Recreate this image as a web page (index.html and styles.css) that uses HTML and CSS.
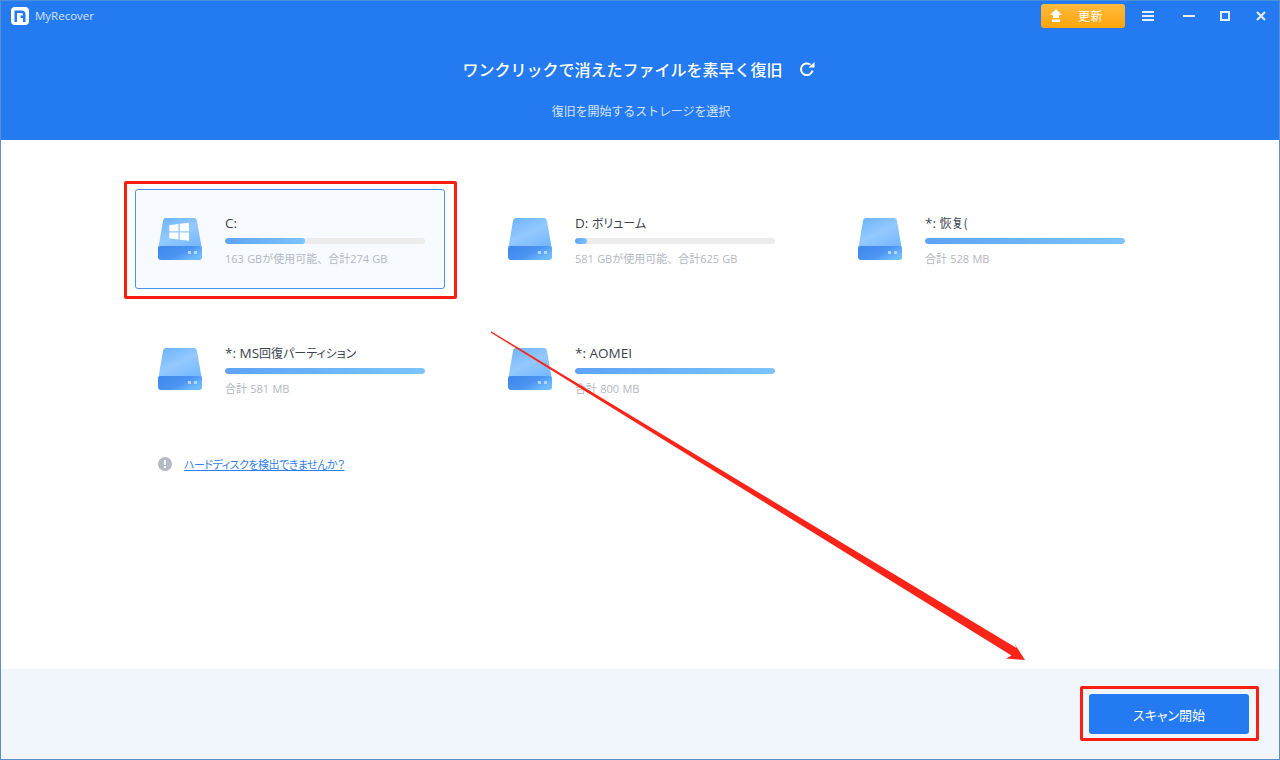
FILE: index.html
```html
<!DOCTYPE html>
<html lang="ja">
<head>
<meta charset="utf-8">
<title>MyRecover</title>
<link rel="stylesheet" href="styles.css">
</head>
<body>
<div class="window">
  <svg width="0" height="0" class="defs">
    <defs>
      <linearGradient id="dTop" x1="0.15" y1="0" x2="0.85" y2="1">
        <stop offset="0" stop-color="#70b4fc"/><stop offset="0.5" stop-color="#93c9fe"/><stop offset="1" stop-color="#75b8fc"/>
      </linearGradient>
      <linearGradient id="dBot" x1="0" y1="0" x2="1" y2="0.6">
        <stop offset="0" stop-color="#3d87ec"/><stop offset="0.6" stop-color="#4b94f2"/><stop offset="1" stop-color="#6ebcfb"/>
      </linearGradient>
      <symbol id="disk" viewBox="0 0 44 42">
        <path d="M8 0H36Q38.500 0 39 3L43.500 29H0.500L5 3Q5.500 0 8 0Z" fill="url(#dTop)"/>
        <path d="M0 30Q0 28 3 28H41Q44 28 44 30V39Q44 42 41 42H3Q0 42 0 39Z" fill="url(#dBot)"/>
        <rect x="30" y="33" width="3" height="3" fill="#b5d6fa"/>
        <rect x="36" y="33" width="3" height="3" fill="#b5d6fa"/>
      </symbol>
    </defs>
  </svg>

  <header class="hero">
    <div class="titlebar">
      <div class="brand">
        <svg class="logo" width="18" height="18" viewBox="0 0 18 18">
          <rect width="18" height="18" rx="4" fill="#fff"/>
          <path d="M3.500 15V3.500H10.500Q14.500 3.500 14.500 7.500V15H12V11H9.500V8.500H12V7.500Q12 6 10.500 6H6V15Z" fill="#247af0"/>
        </svg>
        <span class="brand-name">MyRecover</span>
      </div>
      <div class="controls">
        <button class="update">
          <svg width="12" height="13" viewBox="0 0 12 13"><path d="M6 0L12 6H9V9H3V6H0Z M2 10.500H10V13H2Z" fill="#fff"/></svg>
          <span>更新</span>
        </button>
        <svg class="ctl ctl-menu" width="12" height="10" viewBox="0 0 12 10"><path d="M0 0H12V2H0ZM0 4H12V6H0ZM0 8H12V10H0Z" fill="#e6eefa"/></svg>
        <svg class="ctl ctl-min" width="12" height="2" viewBox="0 0 12 2"><path d="M0 0H12V2H0Z" fill="#e6eefa"/></svg>
        <svg class="ctl ctl-max" width="10" height="10" viewBox="0 0 10 10"><path d="M1 1H9V9H1Z" fill="none" stroke="#e6eefa" stroke-width="2"/></svg>
        <svg class="ctl ctl-close" width="10" height="10" viewBox="0 0 10 10"><path d="M1 1L9 9M9 1L1 9" fill="none" stroke="#e6eefa" stroke-width="2"/></svg>
      </div>
    </div>
    <div class="hero-title">
      <h1>ワンクリックで消えたファイルを素早く復旧</h1>
      <svg class="refresh" width="16" height="16" viewBox="0 0 16 16"><path d="M13.500 9.500A5.800 5.800 0 1 1 11.500 3.800" fill="none" stroke="#fff" stroke-width="2"/><path d="M9.500 6.500H15.500V1Z" fill="#fff"/></svg>
    </div>
    <p class="hero-sub">復旧を開始するストレージを選択</p>
  </header>

  <main class="content">
    <div class="drives">
      <div class="drive selected">
        <svg class="disk" width="44" height="42" viewBox="0 0 44 42">
          <use href="#disk"/>
          <path d="M11.300 7.300L20.500 6V13.300H11.300ZM21.800 5.800L31 4.700V13.300H21.800ZM11.300 14.500H20.500V21.500L11.300 20.300ZM21.800 14.500H31V22.800L21.800 21.700Z" fill="#fff"/>
        </svg>
        <div class="info">
          <div class="name">C:</div>
          <div class="bar"><div class="fill" style="width:40%"></div></div>
          <div class="size">163 GBが使用可能、合計274 GB</div>
        </div>
      </div>
      <div class="drive">
        <svg class="disk" width="44" height="42" viewBox="0 0 44 42"><use href="#disk"/></svg>
        <div class="info">
          <div class="name">D: <span class="jp">ボリューム</span></div>
          <div class="bar"><div class="fill" style="width:6%"></div></div>
          <div class="size">581 GBが使用可能、合計625 GB</div>
        </div>
      </div>
      <div class="drive">
        <svg class="disk" width="44" height="42" viewBox="0 0 44 42"><use href="#disk"/></svg>
        <div class="info">
          <div class="name">*: <span class="jp">恢复(</span></div>
          <div class="bar"><div class="fill" style="width:100%"></div></div>
          <div class="size">合計 528 MB</div>
        </div>
      </div>
      <div class="drive">
        <svg class="disk" width="44" height="42" viewBox="0 0 44 42"><use href="#disk"/></svg>
        <div class="info">
          <div class="name">*: MS<span class="jp">回復パーティション</span></div>
          <div class="bar"><div class="fill" style="width:100%"></div></div>
          <div class="size">合計 581 MB</div>
        </div>
      </div>
      <div class="drive">
        <svg class="disk" width="44" height="42" viewBox="0 0 44 42"><use href="#disk"/></svg>
        <div class="info">
          <div class="name">*: AOMEI</div>
          <div class="bar"><div class="fill" style="width:100%"></div></div>
          <div class="size">合計 800 MB</div>
        </div>
      </div>
    </div>
    <div class="help">
      <svg width="14" height="14" viewBox="0 0 14 14"><circle cx="7" cy="7" r="7" fill="#b4bac4"/><path d="M6 3H8L7.700 8H6.300ZM6 9.300H8V11H6Z" fill="#fff"/></svg>
      <a class="help-link" href="#">ハードディスクを検出できませんか？</a>
    </div>
  </main>

  <footer class="footer">
    <button class="scan">スキャン開始</button>
  </footer>

  <div class="mark mark-drive"></div>
  <div class="mark mark-scan"></div>
  <svg class="arrow" width="1280" height="760" viewBox="0 0 1280 760">
    <path d="M491 331.200L1016.500 648L1014 643L1025 660L1006 658.500L1011.500 655.500L491 332.800Z" fill="#fb2418"/>
  </svg>
</div>
</body>
</html>
```

FILE: styles.css
```css
* { box-sizing: border-box; }
html, body { margin: 0; padding: 0; }
body {
  width: 1280px;
  height: 760px;
  overflow: hidden;
  background: #fff;
  font-family: "Noto Sans CJK JP", "Noto Sans", sans-serif;
}
.defs { position: absolute; }
.window {
  position: relative;
  width: 1280px;
  height: 760px;
  display: flex;
  flex-direction: column;
  border: 1px solid #5b8fc9;
  border-top-color: #4a90d9;
  background: #fff;
}
.hero {
  height: 139px;
  flex: none;
  background: #247af0;
  color: #fff;
  display: flex;
  flex-direction: column;
}
.titlebar {
  height: 30px;
  display: flex;
  justify-content: space-between;
  align-items: flex-start;
}
.brand {
  display: flex;
  align-items: center;
  gap: 6px;
  padding: 6px 0 0 10px;
}
.logo { display: block; }
.brand-name {
  font-family: "Open Sans", "Noto Sans", sans-serif;
  font-size: 11.500px;
  line-height: 18px;
  color: #d3e4fb;
}
.controls {
  display: flex;
  align-items: center;
  height: 30px;
  padding-right: 13px;
}
.update {
  width: 84px;
  height: 24px;
  margin-top: -1px;
  border: 0;
  border-radius: 3px;
  background: linear-gradient(#ffba3d, #ffa50c);
  color: #fff;
  display: flex;
  align-items: center;
  padding: 0 0 0 9px;
  font-family: inherit;
  font-size: 12px;
}
.update span { margin-left: 16px; letter-spacing: 0.5px; }
.ctl { display: block; flex: none; }
.ctl-menu { margin-left: 17px; }
.ctl-min { margin-left: 29px; }
.ctl-max { margin-left: 25px; }
.ctl-close { margin-left: 26px; }
.hero-title {
  display: flex;
  justify-content: center;
  align-items: center;
  height: 30px;
  margin-top: 23px;
  padding-right: 3px;
}
.hero-title h1 {
  margin: 0;
  font-size: 16px;
  line-height: 30px;
  font-weight: 500;
}
.refresh { margin-left: 16px; }
.hero-sub {
  margin: 17px 0 0;
  padding-left: 2px;
  text-align: center;
  font-size: 12px;
  letter-spacing: -0.1px;
  line-height: 20px;
  color: #d3e4fb;
}
.content {
  flex: 1;
  padding: 49px 0 0 134px;
}
.drives {
  display: grid;
  grid-template-columns: repeat(3, 310px);
  grid-auto-rows: 100px;
  column-gap: 40px;
  row-gap: 30px;
}
.drive {
  display: flex;
  align-items: flex-start;
  border: 1px solid transparent;
  border-radius: 3px;
  padding: 28px 0 0 22px;
}
.drive.selected {
  background: #f7faff;
  border-color: #4a94f0;
}
.disk { display: block; flex: none; }
.info {
  margin-left: 23px;
  margin-top: -4px;
  width: 200px;
}
.name {
  font-family: "Open Sans", "Noto Sans CJK JP", sans-serif;
  font-size: 13.500px;
  line-height: 18px;
  color: #3a4250;
}
.jp {
  font-family: "Noto Sans CJK JP", sans-serif;
  font-feature-settings: "palt";
  font-size: 12px;
}
.bar {
  height: 6px;
  margin-top: 6px;
  border-radius: 3px;
  background: #ececec;
  overflow: hidden;
}
.fill {
  height: 100%;
  border-radius: 3px;
  background: linear-gradient(90deg, #5ea3f5, #7cc4fd);
}
.size {
  margin-top: 7px;
  font-family: "Open Sans", "Noto Sans CJK JP", sans-serif;
  font-size: 11px;
  word-spacing: 0.4px;
  line-height: 16px;
  color: #b3b8c2;
}
.help {
  display: flex;
  align-items: center;
  margin: 35px 0 0 23px;
  height: 20px;
}
.help-link {
  margin-left: 12px;
  font-feature-settings: "palt";
  font-size: 11px;
  letter-spacing: -0.5px;
  color: #2f80ee;
  text-decoration: underline;
}
.footer {
  height: 90px;
  flex: none;
  background: #f1f6fd;
  display: flex;
  justify-content: flex-end;
  align-items: flex-start;
  padding: 25px 30px 0 0;
}
.scan {
  width: 160px;
  height: 40px;
  border: 0;
  border-radius: 3px;
  background: #247af0;
  color: #fff;
  font-family: inherit;
  font-feature-settings: "palt";
  font-size: 13px;
}
.mark {
  position: absolute;
  border: 3px solid #fb1d10;
  border-radius: 2px;
}
.mark-drive { left: 123px; top: 180px; width: 333px; height: 118px; }
.mark-scan { left: 1079px; top: 685px; width: 179px; height: 55px; }
.arrow { position: absolute; left: -1px; top: -1px; pointer-events: none; }
```
